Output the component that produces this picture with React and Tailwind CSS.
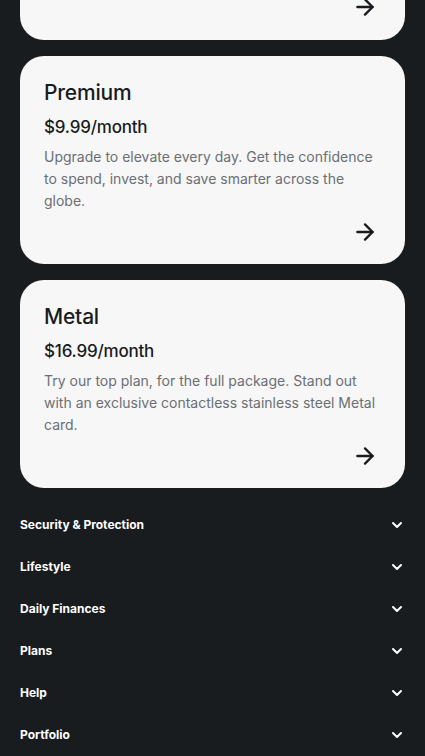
import { ArrowRight, ChevronDown } from 'lucide-react';

const plans = [
    {
        name: "Premium",
        price: "$9.99/month",
        text: "Upgrade to elevate every day. Get the confidence to spend, invest, and save smarter across the globe."
    },
    {
        name: "Metal",
        price: "$16.99/month",
        text: "Try our top plan, for the full package. Stand out with an exclusive contactless stainless steel Metal card."
    }
];

const links = ["Security & Protection", "Lifestyle", "Daily Finances", "Plans", "Help", "Portfolio"];

function Arrow() {
    return (
        <div className="flex justify-end mr-[3px]">
            <ArrowRight size={26} strokeWidth={2.2} className="text-[#191c1f]" />
        </div>
    );
}

function PlanCard({ name, price, text }) {
    return (
        <div className="bg-[#f7f7f7] rounded-[24px] px-6 pt-[23px] pb-[19px]">
            <h3 className="text-[21px] leading-[28px] font-medium text-[#191c1f] tracking-[-0.2px]">{name}</h3>
            <p className="mt-2 text-[17px] leading-[24px] font-medium text-[#191c1f] tracking-[-0.2px]">{price}</p>
            <p className="mt-[7px] text-[14px] leading-[22px] text-[#6b6f75]">{text}</p>
            <div className="mt-[7px]">
                <Arrow />
            </div>
        </div>
    );
}

export default function App() {
    return (
        <div className="min-h-[756px] bg-[#191c1f] px-5 overflow-hidden" style={{ fontFamily: "Inter, 'Noto Sans', sans-serif" }}>
            {/* Previous card, scrolled mostly out of view */}
            <div className="bg-[#f7f7f7] rounded-b-[24px] h-[40px] px-6 flex flex-col justify-end pb-[20px]">
                <Arrow />
            </div>

            <div className="flex flex-col gap-4 mt-4">
                {plans.map((p) => (
                    <PlanCard key={p.name} {...p} />
                ))}
            </div>

            <ul className="mt-4">
                {links.map((l) => (
                    <li key={l} className="h-[42px] flex items-center justify-between text-white">
                        <span className="text-[12px] font-bold">{l}</span>
                        <ChevronDown size={16} strokeWidth={3} />
                    </li>
                ))}
            </ul>
        </div>
    );
}
